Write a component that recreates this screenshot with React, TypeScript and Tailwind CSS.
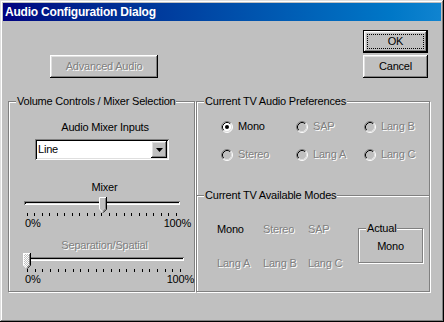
import React from "react";

const raised =
  "shadow-[inset_-1px_-1px_#000,inset_1px_1px_#fff,inset_-2px_-2px_#808080,inset_2px_2px_#dfdfdf]";
const sunken =
  "shadow-[inset_1px_1px_#808080,inset_-1px_-1px_#fff,inset_2px_2px_#000,inset_-2px_-2px_#dfdfdf]";
const dis = "text-[#808080] [text-shadow:1px_1px_0_#fff]";

function Radio({ checked, disabled }: { checked?: boolean; disabled?: boolean }) {
  return (
    <svg width="12" height="12" viewBox="0 0 12 12" className="shrink-0">
      <circle cx="6" cy="6" r="5" fill={disabled ? "#c0c0c0" : "#fff"} />
      <path d="M2.11 9.89 A5.5 5.5 0 0 1 9.89 2.11" stroke="#808080" fill="none" />
      <path d="M9.89 2.11 A5.5 5.5 0 0 1 2.11 9.89" stroke="#fff" fill="none" />
      <path d="M2.82 9.18 A4.5 4.5 0 0 1 9.18 2.82" stroke="#000" fill="none" />
      <path d="M9.18 2.82 A4.5 4.5 0 0 1 2.82 9.18" stroke="#dfdfdf" fill="none" />
      {checked && <circle cx="6" cy="6" r="2" fill="#000" />}
    </svg>
  );
}

function Thumb({ disabled }: { disabled?: boolean }) {
  return (
    <svg width="8" height="16" viewBox="0 0 8 16">
      <defs>
        <pattern id="dith" width="2" height="2" patternUnits="userSpaceOnUse">
          <rect width="2" height="2" fill="#c0c0c0" />
          <rect width="1" height="1" fill="#fff" />
          <rect x="1" y="1" width="1" height="1" fill="#fff" />
        </pattern>
      </defs>
      <polygon points="0,0 8,0 8,12 4,16 0,12" fill={disabled ? "url(#dith)" : "#c0c0c0"} />
      <path d="M0.5 12 V0.5 H7" stroke="#fff" fill="none" />
      <path d="M0.5 12 L4 15.5" stroke="#fff" fill="none" />
      <path d="M7.5 0 V12.2 L4 15.7" stroke="#000" fill="none" />
      <path d="M6.5 1 V11.8 L4 14.3" stroke="#808080" fill="none" />
    </svg>
  );
}

function Ticks({ className }: { className: string }) {
  return (
    <div className={"flex justify-between h-[3px] " + className}>
      {Array.from({ length: 21 }).map((_, i) => (
        <div key={i} className="w-[1px] h-[3px] bg-black" />
      ))}
    </div>
  );
}

function GroupLabel({ children }: { children: React.ReactNode }) {
  return (
    <span className="absolute -top-[7px] left-[7px] bg-[#c0c0c0] px-[1px] leading-[13px] whitespace-nowrap">
      {children}
    </span>
  );
}

function Btn({
  children,
  className = "",
  disabled,
  def,
}: {
  children: React.ReactNode;
  className?: string;
  disabled?: boolean;
  def?: boolean;
}) {
  if (def) {
    return (
      <div className={"border border-black bg-[#c0c0c0] " + className}>
        <div className={"h-full w-full p-[3px] " + raised}>
          <div className="h-full w-full border border-dotted border-black flex items-center justify-center">
            {children}
          </div>
        </div>
      </div>
    );
  }
  return (
    <div className={"flex items-center justify-center bg-[#c0c0c0] " + raised + " " + className + (disabled ? " " + dis : "")}>
      {children}
    </div>
  );
}

export default function App() {
  return (
    <div className="w-[444px] h-[322px] bg-[#c0c0c0] p-[3px] flex flex-col text-[11px] leading-[13px] tracking-[-0.2px] text-black font-['Liberation_Sans',Arial,sans-serif] shadow-[inset_-1px_-1px_#000,inset_1px_1px_#dfdfdf,inset_-2px_-2px_#808080,inset_2px_2px_#fff]">
      <div className="h-[18px] shrink-0 bg-linear-to-r from-[#000080] to-[#1084d0] flex items-center pl-[2px] text-white font-bold text-[12px]">
        Audio Configuration Dialog
      </div>
      <div className="flex pl-[5px] gap-[1px]">
        {/* Left column */}
        <div className="w-[187px] flex flex-col">
          <Btn disabled className="mt-[34px] ml-[42px] w-[108px] h-[23px]">
            Advanced Audio
          </Btn>
          <div className="relative mt-[23px] h-[191px] border border-[#808080] shadow-[1px_1px_0_#fff,inset_1px_1px_0_#fff] flex flex-col">
            <GroupLabel>Volume Controls / Mixer Selection</GroupLabel>
            <div className="mt-[19px] h-[13px] text-center pl-[7px]">Audio Mixer Inputs</div>
            <div className={"mt-[5px] ml-[26px] w-[134px] h-[21px] bg-white flex items-center justify-between pl-[3px] pr-[2px] " + sunken}>
              <span>Line</span>
              <div className={"w-[16px] h-[17px] bg-[#c0c0c0] flex items-center justify-center " + raised}>
                <svg width="7" height="4" viewBox="0 0 7 4">
                  <polygon points="0,0 7,0 3.5,4" fill="#000" />
                </svg>
              </div>
            </div>
            <div className="mt-[21px] h-[13px] text-center pl-[6px]">Mixer</div>
            <div className="relative mt-[3px] ml-[15px] w-[156px] h-[16px]">
              <div className={"absolute top-[4px] left-0 w-full h-[4px] " + sunken} />
              <div className="absolute top-0 left-[75px] leading-none">
                <Thumb />
              </div>
            </div>
            <Ticks className="ml-[18px] w-[150px]" />
            <div className="mt-[1px] ml-[16px] w-[166px] flex justify-between h-[13px]">
              <span>0%</span>
              <span>100%</span>
            </div>
            <div className={"mt-[9px] h-[13px] text-center pl-[6px] " + dis}>Separation/Spatial</div>
            <div className="relative mt-[1px] ml-[15px] w-[160px] h-[16px]">
              <div className={"absolute top-[4px] left-0 w-full h-[4px] " + sunken} />
              <div className="absolute top-0 -left-[1px] leading-none">
                <Thumb disabled />
              </div>
            </div>
            <Ticks className="ml-[18px] w-[154px]" />
            <div className="mt-[1px] ml-[16px] w-[169px] flex justify-between h-[13px]">
              <span>0%</span>
              <span>100%</span>
            </div>
          </div>
        </div>

        {/* Right column */}
        <div className="w-[234px] flex flex-col">
          <div className="flex flex-col items-end mr-[2px]">
            <Btn def className="mt-[9px] w-[65px] h-[23px]">
              OK
            </Btn>
            <Btn className="mt-[2px] w-[65px] h-[23px]">Cancel</Btn>
          </div>
          <div className="relative mt-[23px] h-[191px] border border-[#808080] shadow-[1px_1px_0_#fff,inset_1px_1px_0_#fff] flex flex-col">
            <GroupLabel>Current TV Audio Preferences</GroupLabel>
            <div className="mt-[18px] ml-[24px] grid grid-cols-[75px_68px_70px] gap-y-[15px]">
              <div className="flex items-center gap-[5px] h-[13px]">
                <Radio checked />
                <span>Mono</span>
              </div>
              <div className="flex items-center gap-[5px] h-[13px]">
                <Radio disabled />
                <span className={dis}>SAP</span>
              </div>
              <div className="flex items-center gap-[5px] h-[13px]">
                <Radio disabled />
                <span className={dis}>Lang B</span>
              </div>
              <div className="flex items-center gap-[5px] h-[13px]">
                <Radio disabled />
                <span className={dis}>Stereo</span>
              </div>
              <div className="flex items-center gap-[5px] h-[13px]">
                <Radio disabled />
                <span className={dis}>Lang A</span>
              </div>
              <div className="flex items-center gap-[5px] h-[13px]">
                <Radio disabled />
                <span className={dis}>Lang C</span>
              </div>
            </div>
            <div className="relative mt-[34px] h-[2px] border-t border-[#808080] border-b border-b-white">
              <GroupLabel>Current TV Available Modes</GroupLabel>
            </div>
            <div className="flex mt-[26px]">
              <div className="ml-[20px] grid grid-cols-[46px_45px_45px] gap-y-[21px] h-fit">
                <span>Mono</span>
                <span className={dis}>Stereo</span>
                <span className={dis}>SAP</span>
                <span className={dis}>Lang A</span>
                <span className={dis}>Lang B</span>
                <span className={dis}>Lang C</span>
              </div>
              <div className="relative ml-[5px] mt-[5px] w-[65px] h-[35px] border border-[#808080] shadow-[1px_1px_0_#fff,inset_1px_1px_0_#fff] flex justify-center items-center">
                <span className="absolute -top-[7px] left-[7px] bg-[#c0c0c0] px-[1px] leading-[13px]">Actual</span>
                <span className="mt-[2px]">Mono</span>
              </div>
            </div>
          </div>
        </div>
      </div>
    </div>
  );
}
